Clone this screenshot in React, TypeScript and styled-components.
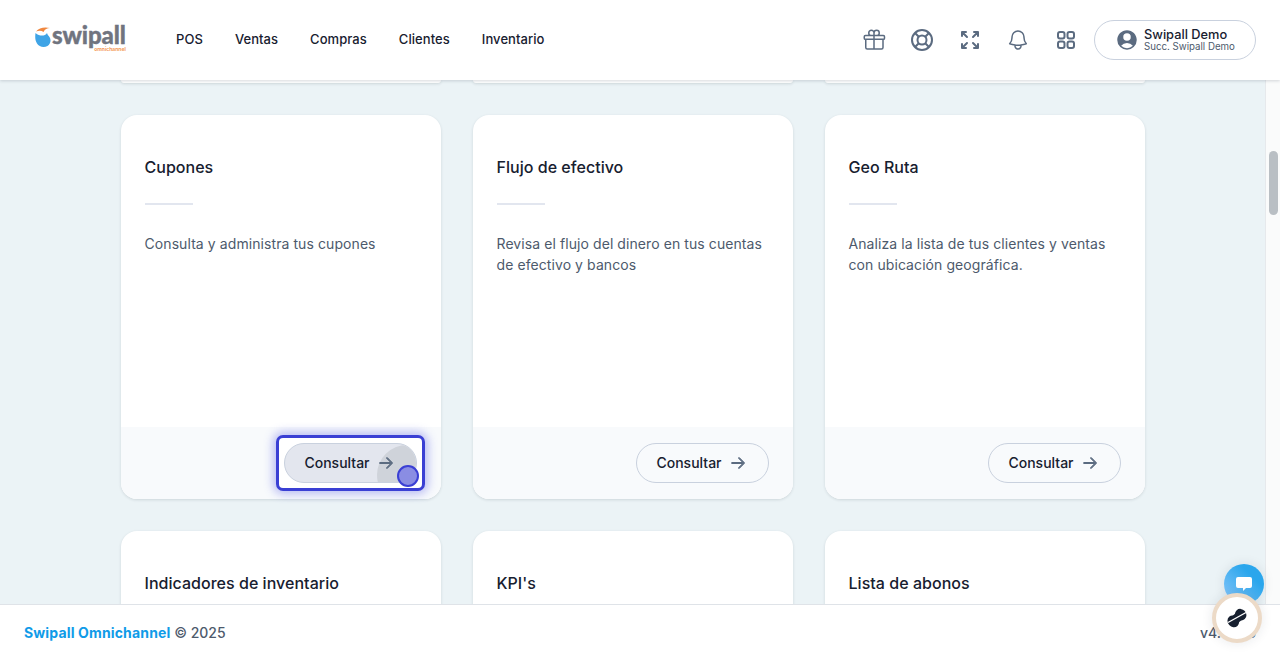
import React from 'react';
import styled, { createGlobalStyle } from 'styled-components';
import { HiOutlineGift, HiOutlineBell, HiUserCircle, HiArrowRight } from 'react-icons/hi2';

const GlobalStyle = createGlobalStyle`
  html, body {
    margin: 0;
    padding: 0;
    height: 100%;
    overflow: hidden;
  }
  body {
    font-family: Inter, "Liberation Sans", sans-serif;
    color: #111c2e;
    background: #ebf3f6;
  }
`;

const Page = styled.div`
  position: relative;
  width: 1280px;
  height: 660px;
  display: flex;
  flex-direction: column;
  overflow: hidden;
`;

const Header = styled.header`
  position: relative;
  z-index: 2;
  flex: 0 0 80px;
  background: #fff;
  display: flex;
  align-items: center;
  padding: 0 24px 0 35px;
  box-shadow: 0 1px 3px rgba(30, 41, 59, 0.18);
`;

const Logo = styled.div`
  display: flex;
  align-items: flex-start;
  gap: 1px;
  width: 141px;
  height: 23px;
  margin-top: -4px;
`;

const LogoWord = styled.div`
  display: flex;
  flex-direction: column;
  align-items: flex-end;
  margin-top: -3px;
`;

const LogoName = styled.span`
  font-family: Lato, sans-serif;
  font-weight: 900;
  font-size: 24px;
  line-height: 22px;
  letter-spacing: -0.1px;
  -webkit-text-stroke: 0.4px #70747f;
  color: #70747f;
`;

const LogoSub = styled.span`
  font-size: 5px;
  line-height: 4px;
  font-weight: 700;
  color: #f39a5b;
  margin-top: 1px;
`;

const Nav = styled.nav`
  display: flex;
  gap: 32px;
  flex: 1;
  padding-bottom: 2px;
`;

const NavItem = styled.a`
  font-size: 13px;
  font-weight: 500;
  letter-spacing: 0.06px;
  color: #17202f;
`;

const IconBar = styled.div`
  display: flex;
  align-items: center;
  gap: 24px;
  margin-right: 16px;
  color: #5b6b80;
`;

const UserPill = styled.div`
  width: 162px;
  height: 40px;
  box-sizing: border-box;
  border: 1px solid #c9d1de;
  border-radius: 20px;
  display: flex;
  align-items: center;
  padding-left: 20px;
  gap: 5px;
  color: #5b6b80;
`;

const UserText = styled.div`
  display: flex;
  flex-direction: column;
`;

const UserName = styled.span`
  font-size: 12.8px;
  line-height: 13px;
  font-weight: 500;
  color: #17202f;
`;

const UserBranch = styled.span`
  font-size: 9.7px;
  line-height: 11px;
  color: #4d5a6c;
`;

const Body = styled.div`
  flex: 1;
  min-height: 0;
  display: flex;
`;

const Content = styled.main`
  flex: 1;
  min-width: 0;
  overflow: hidden;
  display: flex;
  justify-content: center;
`;

const CardGrid = styled.div`
  display: grid;
  grid-template-columns: repeat(3, 320px);
  grid-template-rows: 3px 384px 384px;
  gap: 32px;
  margin-left: 1px;
`;

const CutCard = styled.div`
  background: #fff;
  border-radius: 0 0 16px 16px;
  box-shadow: 0 1px 3px rgba(30, 41, 59, 0.14);
`;

const Card = styled.article`
  background: #fff;
  border-radius: 16px;
  box-shadow: 0 1px 3px rgba(30, 41, 59, 0.14);
  display: flex;
  flex-direction: column;
`;

const CardBody = styled.div`
  flex: 1;
  padding: 42px 24px 0 23.5px;
`;

const CardTitle = styled.h2`
  margin: 0;
  font-size: 16px;
  line-height: 20px;
  font-weight: 500;
  letter-spacing: 0.03px;
  color: #17202f;
`;

const Divider = styled.hr`
  width: 48px;
  height: 2px;
  margin: 26px 0 0;
  border: 0;
  background: #e2e6ef;
`;

const CardText = styled.p`
  margin: 28px 0 0;
  font-size: 14px;
  line-height: 21px;
  letter-spacing: 0.08px;
  color: #4d5a6c;
`;

const CardFooter = styled.div`
  flex: 0 0 72px;
  background: #f8fafc;
  border-radius: 0 0 16px 16px;
  display: flex;
  align-items: center;
  justify-content: flex-end;
  padding-right: 24px;
`;

const FocusRing = styled.div`
  position: relative;
  display: flex;
  padding: 5px;
  margin-right: -8px;
  border: 3px solid #3a3fd4;
  border-radius: 7px;
  background: #fff;
  box-shadow: 0 0 10px 3px rgba(88, 92, 230, 0.4);
`;

const ConsultButton = styled.button<{ $pressed?: boolean }>`
  position: relative;
  overflow: hidden;
  width: 133px;
  height: 40px;
  box-sizing: border-box;
  padding: 0 3px 1px 0;
  border: 1px solid #c9d1de;
  border-radius: 20px;
  background: ${(p) => (p.$pressed ? '#e3e6ee' : 'transparent')};
  display: flex;
  align-items: center;
  justify-content: center;
  gap: 8px;
  font-family: inherit;
  font-size: 14px;
  font-weight: 500;
  color: #17202f;
`;

const ButtonLabel = styled.span`
  position: relative;
`;

const ButtonIcon = styled.span`
  position: relative;
  display: flex;
  color: #5b6b80;
`;

const Ripple = styled.span`
  position: absolute;
  left: 92px;
  top: 1px;
  width: 60px;
  height: 60px;
  border-radius: 50%;
  background: #cfd3da;
`;

const ClickDot = styled.span`
  position: absolute;
  right: 3px;
  bottom: 1px;
  width: 22px;
  height: 22px;
  box-sizing: border-box;
  border: 2.5px solid #3a3fd4;
  border-radius: 50%;
  background: #8a8de3;
`;

const Rail = styled.div`
  flex: 0 0 15px;
  box-sizing: border-box;
  background: #fafbfb;
  border-left: 1px solid #e6e9ec;
  padding: 71px 2px 0 3px;
`;

const Thumb = styled.div`
  height: 64px;
  border-radius: 5px;
  background: #b9bfc4;
`;

const Footer = styled.footer`
  position: relative;
  z-index: 2;
  flex: 0 0 56px;
  box-sizing: border-box;
  background: #fff;
  border-top: 1px solid #dfe3e8;
  display: flex;
  align-items: center;
  justify-content: space-between;
  padding: 0 24px;
  font-size: 14px;
  font-weight: 500;
  color: #4d5a6c;
`;

const Brand = styled.span`
  font-weight: 700;
  letter-spacing: 0.15px;
  color: #0f9be8;
`;

const ChatBubble = styled.div`
  position: absolute;
  z-index: 3;
  left: 1224px;
  top: 564px;
  width: 40px;
  height: 40px;
  border-radius: 50%;
  background: linear-gradient(45deg, #8cc8fb, #2aa6ec 70%);
  display: flex;
  align-items: center;
  justify-content: center;
  box-shadow: 0 0 12px rgba(30, 41, 59, 0.1);
`;

const SupportButton = styled.div`
  position: absolute;
  z-index: 4;
  left: 1212px;
  top: 593px;
  width: 50px;
  height: 50px;
  box-sizing: border-box;
  border: 4px solid #ecdac7;
  border-radius: 50%;
  background: #fff;
  display: flex;
  align-items: center;
  justify-content: center;
  box-shadow: 0 0 12px rgba(30, 41, 59, 0.1);
`;

const LogoMark = () => (
  <svg width="16" height="21" viewBox="0 0 16 21">
    <path d="M0.5 6C0 10 0 13 2 16.5c2 3.5 7 4.5 10.5 2.5 3-2 4-6 2-9-1-1.5-2-2-2.5-4-1 2-3 2.5-5 2.5C5 8.5 2.5 8 0.5 6z" fill="#3fa4e6" />
    <path d="M1 4.5C4 1 9-0.5 15 1c-3 0-5 1-6.5 4C6.5 3.5 4 3.5 1 4.5z" fill="#f0873f" />
  </svg>
);

const LifebuoyIcon = () => (
  <svg width="24" height="24" viewBox="0 0 24 24" fill="none" stroke="currentColor" strokeWidth="2">
    <circle cx="12" cy="12" r="10" />
    <circle cx="12" cy="12" r="4.5" />
    <path d="M5 5l3.8 3.8M19 5l-3.8 3.8M5 19l3.8-3.8M19 19l-3.8-3.8" />
  </svg>
);

const ExpandIcon = () => (
  <svg width="24" height="24" viewBox="0 0 24 24" fill="none" stroke="currentColor" strokeWidth="2" strokeLinecap="round" strokeLinejoin="round">
    <path d="M4 8V4h4M4 4l5 5M16 4h4v4M20 4l-5 5M4 16v4h4M4 20l5-5M20 16v4h-4M20 20l-5-5" />
  </svg>
);

const AppsIcon = () => (
  <svg width="24" height="24" viewBox="0 0 24 24" fill="none" stroke="currentColor" strokeWidth="2">
    <rect x="4" y="4" width="6.5" height="6.5" rx="2" />
    <rect x="13.5" y="4" width="6.5" height="6.5" rx="2" />
    <rect x="4" y="13.5" width="6.5" height="6.5" rx="2" />
    <rect x="13.5" y="13.5" width="6.5" height="6.5" rx="2" />
  </svg>
);

const SupportMark = () => (
  <svg width="24" height="24" viewBox="0 0 24 24">
    <g transform="rotate(-42 12 12)" fill="#17202f">
      <ellipse cx="7" cy="12" rx="5.5" ry="6.2" />
      <ellipse cx="17" cy="12" rx="5.5" ry="6" />
      <rect x="7" y="7.5" width="10" height="9" />
    </g>
    <path d="M3 16.5L21 6.5" stroke="#fff" strokeWidth="1.4" />
  </svg>
);

const cards = [
  { title: 'Cupones', text: 'Consulta y administra tus cupones', pressed: true },
  { title: 'Flujo de efectivo', text: 'Revisa el flujo del dinero en tus cuentas de efectivo y bancos' },
  { title: 'Geo Ruta', text: 'Analiza la lista de tus clientes y ventas con ubicación geográfica.' },
];

const lowerCards = ['Indicadores de inventario', "KPI's", 'Lista de abonos'];
const menu = ['POS', 'Ventas', 'Compras', 'Clientes', 'Inventario'];

const App: React.FC = () => {
  return (
    <Page>
      <GlobalStyle />
      <Header>
        <Logo>
          <LogoMark />
          <LogoWord>
            <LogoName>swipall</LogoName>
            <LogoSub>omnichannel</LogoSub>
          </LogoWord>
        </Logo>
        <Nav>
          {menu.map((item) => (
            <NavItem key={item}>{item}</NavItem>
          ))}
        </Nav>
        <IconBar>
          <HiOutlineGift size={24} />
          <LifebuoyIcon />
          <ExpandIcon />
          <HiOutlineBell size={24} />
          <AppsIcon />
        </IconBar>
        <UserPill>
          <HiUserCircle size={24} />
          <UserText>
            <UserName>Swipall Demo</UserName>
            <UserBranch>Succ. Swipall Demo</UserBranch>
          </UserText>
        </UserPill>
      </Header>
      <Body>
        <Content>
          <CardGrid>
            <CutCard />
            <CutCard />
            <CutCard />
            {cards.map((card) => (
              <Card key={card.title}>
                <CardBody>
                  <CardTitle>{card.title}</CardTitle>
                  <Divider />
                  <CardText>{card.text}</CardText>
                </CardBody>
                <CardFooter>
                  {card.pressed ? (
                    <FocusRing>
                      <ConsultButton $pressed>
                        <Ripple />
                        <ButtonLabel>Consultar</ButtonLabel>
                        <ButtonIcon>
                          <HiArrowRight size={16} strokeWidth={1.5} />
                        </ButtonIcon>
                      </ConsultButton>
                      <ClickDot />
                    </FocusRing>
                  ) : (
                    <ConsultButton>
                      Consultar
                      <ButtonIcon>
                        <HiArrowRight size={16} strokeWidth={1.5} />
                      </ButtonIcon>
                    </ConsultButton>
                  )}
                </CardFooter>
              </Card>
            ))}
            {lowerCards.map((title) => (
              <Card key={title}>
                <CardBody>
                  <CardTitle>{title}</CardTitle>
                </CardBody>
              </Card>
            ))}
          </CardGrid>
        </Content>
        <Rail>
          <Thumb />
        </Rail>
      </Body>
      <Footer>
        <span>
          <Brand>Swipall Omnichannel</Brand> © 2025
        </span>
        <span>v4.10.06</span>
      </Footer>
      <ChatBubble>
        <svg width="18" height="18" viewBox="0 0 18 18">
          <path d="M3 2h12a2 2 0 0 1 2 2v7a2 2 0 0 1-2 2h-4l-3 3v-3H3a2 2 0 0 1-2-2V4a2 2 0 0 1 2-2z" fill="#fff" />
        </svg>
      </ChatBubble>
      <SupportButton>
        <SupportMark />
      </SupportButton>
    </Page>
  );
};

export default App;
